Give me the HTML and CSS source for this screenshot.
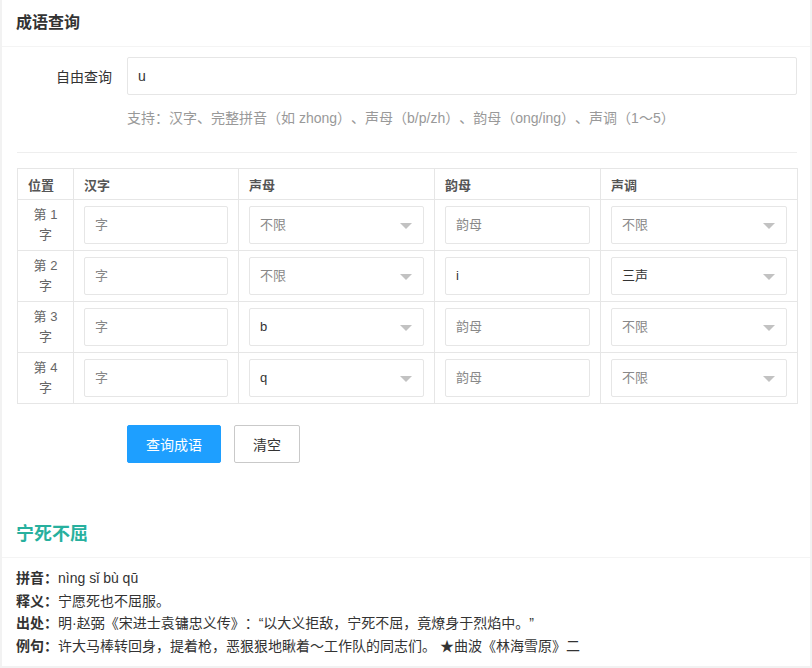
FILE: index.html
```html
<!DOCTYPE html>
<html lang="zh">
<head>
<meta charset="utf-8">
<title>成语查询</title>
<link rel="stylesheet" href="styles.css">
</head>
<body>
<div class="page">
  <section class="card">
    <div class="card-header">成语查询</div>
    <div class="card-body">
      <div class="form-row">
        <label class="form-label">自由查询</label>
        <div class="input value">u</div>
      </div>
      <div class="hint">支持：汉字、完整拼音（如 zhong）、声母（b/p/zh）、韵母（ong/ing）、声调（1～5）</div>
      <hr class="divider">
      <table class="grid">
        <colgroup>
          <col class="c1"><col class="c2"><col class="c3"><col class="c4"><col class="c5">
        </colgroup>
        <thead>
          <tr><th>位置</th><th>汉字</th><th>声母</th><th>韵母</th><th>声调</th></tr>
        </thead>
        <tbody>
          <tr>
            <td class="pos">第 1<br>字</td>
            <td><div class="input ph">字</div></td>
            <td><div class="input select ph">不限<span class="caret"></span></div></td>
            <td><div class="input ph">韵母</div></td>
            <td><div class="input select ph">不限<span class="caret"></span></div></td>
          </tr>
          <tr>
            <td class="pos">第 2<br>字</td>
            <td><div class="input ph">字</div></td>
            <td><div class="input select ph">不限<span class="caret"></span></div></td>
            <td><div class="input value">i</div></td>
            <td><div class="input select value">三声<span class="caret"></span></div></td>
          </tr>
          <tr>
            <td class="pos">第 3<br>字</td>
            <td><div class="input ph">字</div></td>
            <td><div class="input select value">b<span class="caret"></span></div></td>
            <td><div class="input ph">韵母</div></td>
            <td><div class="input select ph">不限<span class="caret"></span></div></td>
          </tr>
          <tr>
            <td class="pos">第 4<br>字</td>
            <td><div class="input ph">字</div></td>
            <td><div class="input select value">q<span class="caret"></span></div></td>
            <td><div class="input ph">韵母</div></td>
            <td><div class="input select ph">不限<span class="caret"></span></div></td>
          </tr>
        </tbody>
      </table>
      <div class="actions">
        <button class="btn btn-primary">查询成语</button>
        <button class="btn btn-plain">清空</button>
      </div>
    </div>
  </section>
  <section class="card result">
    <div class="card-header result-title">宁死不屈</div>
    <div class="result-body">
      <p><b>拼音：</b>nìng sǐ bù qū</p>
      <p><b>释义：</b>宁愿死也不屈服。</p>
      <p><b>出处：</b>明·赵弼《宋进士袁镛忠义传》：“以大义拒敌，宁死不屈，竟燎身于烈焰中。”</p>
      <p><b>例句：</b>许大马棒转回身，提着枪，恶狠狠地瞅着～工作队的同志们。 ★曲波《林海雪原》二</p>
    </div>
  </section>
</div>
</body>
</html>
```

FILE: styles.css
```css
* { box-sizing: border-box; }
html, body {
  margin: 0;
  padding: 0;
  background: #f2f2f2;
}
body {
  font-family: "Liberation Sans", "Noto Sans CJK SC", sans-serif;
  color: #333;
  font-size: 14px;
  padding: 0 2px 2px 2px;
  text-spacing-trim: space-all;
}
.page {
  background: #fff;
}
.card-header {
  height: 47px;
  line-height: 46px;
  padding: 0 14px;
  font-size: 16px;
  font-weight: bold;
  color: #333;
  border-bottom: 1px solid #f4f4f4;
}
.card-body {
  padding: 10px 13px 0 15px;
}
.form-row {
  display: flex;
  align-items: center;
}
.form-label {
  width: 110px;
  padding-right: 15px;
  text-align: right;
  font-size: 14px;
  color: #333;
  flex: none;
}
.input {
  height: 38px;
  line-height: 36px;
  border: 1px solid #e6e6e6;
  border-radius: 2px;
  padding: 0 10px;
  font-size: 13px;
  background: #fff;
  position: relative;
}
.form-row .input {
  flex: 1;
  font-size: 14px;
  padding-left: 10px;
}
.ph { color: #888; }
.value { color: #333; }
.select { padding-right: 30px; }
.caret {
  position: absolute;
  right: 11px;
  top: 16px;
  width: 0;
  height: 0;
  border-left: 6px solid transparent;
  border-right: 6px solid transparent;
  border-top: 6px solid #c2c2c2;
}
.hint {
  margin: 13px 0 0 110px;
  font-size: 14px;
  line-height: 20px;
  color: #999;
}
.divider {
  border: 0;
  border-top: 1px solid #eee;
  margin: 24px 0 15px;
}
.grid {
  width: 780px;
  border-collapse: collapse;
  table-layout: fixed;
  font-size: 13px;
}
.c1 { width: 56px; }
.c2 { width: 165px; }
.c3 { width: 196px; }
.c4 { width: 166px; }
.c5 { width: 197px; }
.grid th, .grid td {
  border: 1px solid #e6e6e6;
}
.grid th {
  height: 31px;
  padding: 0 10px;
  text-align: left;
  font-weight: bold;
  color: #555;
  font-size: 13px;
}
.grid td {
  height: 51px;
  padding: 6px 10px;
  vertical-align: middle;
}
.grid td.pos {
  padding: 0;
  text-align: center;
  color: #666;
  line-height: 20px;
}
.actions {
  display: flex;
  gap: 13px;
  padding: 21px 0 0 110px;
}
.btn {
  height: 38px;
  padding: 0 18px;
  font-family: inherit;
  font-size: 14px;
  border-radius: 2px;
  cursor: pointer;
}
.btn-primary {
  background: #1e9fff;
  color: #fff;
  border: 1px solid #1e9fff;
}
.btn-plain {
  background: #fff;
  color: #333;
  border: 1px solid #c9c9c9;
}
.result {
  padding-top: 48px;
}
.result-title {
  color: #27b09e;
  font-size: 18px;
}
.result-body {
  padding: 9px 14px 9px;
}
.result-body p {
  margin: 0;
  line-height: 22.5px;
  font-size: 14px;
  color: #333;
}
.result-body b {
  font-weight: bold;
}
```
